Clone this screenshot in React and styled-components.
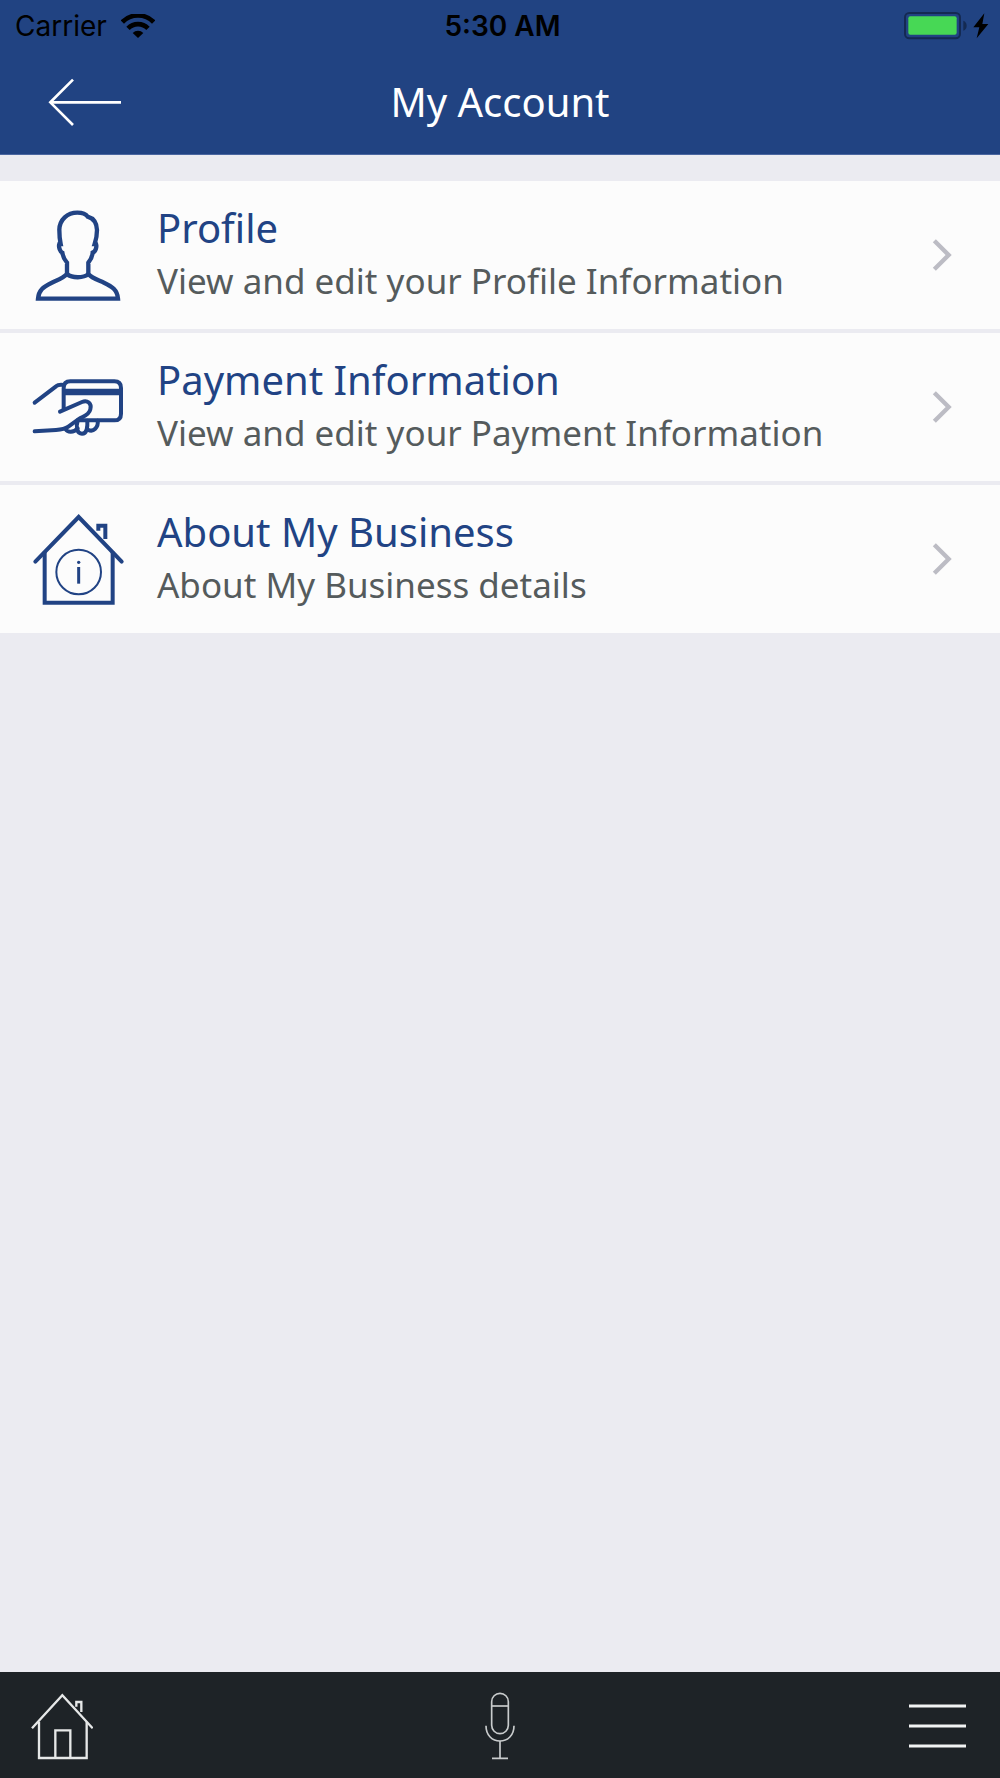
import styled, { createGlobalStyle } from "styled-components";

const items = [
  {
    title: "Profile",
    text: "View and edit your Profile Information",
    Icon: ProfileIcon,
  },
  {
    title: "Payment Information",
    text: "View and edit your Payment Information",
    Icon: PaymentIcon,
  },
  {
    title: "About My Business",
    text: "About My Business details",
    Icon: BusinessIcon,
  },
];

const App = () => {
  return (
    <Page>
      <GlobalStyle />
      <Header>
        <StatusBar>
          <Carrier>
            Carrier
            <WifiIcon />
          </Carrier>
          <Time>5:30 AM</Time>
          <Power>
            <BatteryIcon />
          </Power>
        </StatusBar>
        <NavBar>
          <BackButton aria-label="Back">
            <BackIcon />
          </BackButton>
          <Title>My Account</Title>
        </NavBar>
      </Header>
      <Menu>
        {items.map(({ title, text, Icon }) => (
          <MenuItem key={title} href="#">
            <Icon />
            <MenuText>
              <MenuTitle>{title}</MenuTitle>
              <MenuInfo>{text}</MenuInfo>
            </MenuText>
            <ChevronIcon />
          </MenuItem>
        ))}
      </Menu>
      <TabBar>
        <TabButton aria-label="Home" $align="flex-start">
          <HomeIcon />
        </TabButton>
        <TabButton aria-label="Voice" $align="center">
          <MicIcon />
        </TabButton>
        <TabButton aria-label="Menu" $align="flex-end">
          <BarsIcon />
        </TabButton>
      </TabBar>
    </Page>
  );
};

export default App;

function WifiIcon() {
  return (
    <svg width="34" height="24" viewBox="0 0 102 72" aria-hidden="true">
      <path d="M51 72 L35 57 A22 22 0 0 1 67 57 Z" fill="#000" />
      <path d="M21 43 A42 42 0 0 1 81 43" fill="none" stroke="#000" strokeWidth="14" />
      <path d="M4 24 A66 66 0 0 1 98 24" fill="none" stroke="#000" strokeWidth="14" />
    </svg>
  );
}

function BatteryIcon() {
  return (
    <svg width="86" height="28" viewBox="0 0 258 84" aria-hidden="true">
      <rect x="3" y="3" width="165" height="76" rx="13" fill="none" stroke="#142a52" strokeWidth="6" />
      <rect x="13" y="13" width="145" height="55" rx="6" fill="#47d855" />
      <path d="M178 26 Q188 30 188 41 Q188 52 178 56 Z" fill="#142a52" />
      <path d="M241 4 L208 46 H226 L218 79 L253 36 H235 Z" fill="#000" />
    </svg>
  );
}

function BackIcon() {
  return (
    <svg width="74" height="50" viewBox="0 0 222 150" fill="none" stroke="#fff" strokeWidth="8" aria-hidden="true">
      <path d="M6 76 H219" />
      <path d="M75 8 L7 76 L75 144" />
    </svg>
  );
}

function ProfileIcon() {
  return (
    <ItemSvg viewBox="0 0 360 360" strokeWidth="13">
      <path d="M54 311 H294 C292 285 276 274 252 263 C232 254 216 250 205 237 V203 C213 193 217 186 218 173 C227 170 231 155 228 147 H224 C229 132 231 117 231 105 C230 82 221 70 203 65 C197 56 184 53 172 53 C142 53 119 74 118 104 C118 119 119 133 122 147 H118 C115 155 120 170 127 173 C129 187 132 193 141 203 V237 C130 249 113 255 94 264 C69 276 56 286 54 311 Z" />
      <path d="M141 237 C156 250 191 250 205 237" />
    </ItemSvg>
  );
}

function PaymentIcon() {
  return (
    <ItemSvg viewBox="0 -9 360 360" strokeWidth="12" strokeLinecap="round">
      <path d="M44 158 L108 109 Q116 102 132 105" />
      <path d="M131 176 V114 Q131 94 151 94 H283 Q303 94 303 114 V191 Q303 211 283 211 H174" />
      <path d="M132 126 H303" strokeWidth="20" strokeLinecap="butt" />
      <path d="M120 185 L186 156 C202 149 216 160 211 178 C207 196 188 200 178 206 L145 230 C134 238 124 239 108 240 L44 244" />
      <path d="M137 238 C143 248 160 249 173 235" />
      <path d="M173 212 C167 232 171 251 186 251 C201 251 203 231 202 212" />
      <path d="M204 239 C220 248 236 232 233 212" />
    </ItemSvg>
  );
}

function BusinessIcon() {
  return (
    <ItemSvg viewBox="0 -3 360 360" strokeWidth="12">
      <path d="M46 185 L176 51 L305 185" strokeLinecap="round" />
      <path d="M74 155 V308 H278 V155" />
      <path d="M235 92 V77 H256 V117" />
      <circle cx="176" cy="216" r="67" strokeWidth="6" />
      <path d="M176 201 V251" strokeWidth="9" />
      <circle cx="176" cy="187" r="5" fill="#214384" stroke="none" />
    </ItemSvg>
  );
}

function ChevronIcon() {
  return (
    <svg width="20" height="32" viewBox="0 0 60 96" fill="none" stroke="#bcbcc4" strokeWidth="13" aria-hidden="true">
      <path d="M7 5 L50 48 L7 91" />
    </svg>
  );
}

function HomeIcon() {
  return (
    <svg width="62" height="68" viewBox="0 0 186 204" fill="none" stroke="#e6e8e8" strokeWidth="7" aria-hidden="true">
      <path d="M3 109 L94 10 L185 109" />
      <path d="M24 89 V198 H167 V89" />
      <path d="M73 198 V115 H118 V198" />
      <path d="M136 44 V30 H151 V60" />
    </svg>
  );
}

function MicIcon() {
  return (
    <svg width="30" height="68" viewBox="0 0 90 204" fill="none" stroke="#c9cccd" strokeWidth="5" aria-hidden="true">
      <rect x="20" y="4" width="50" height="121" rx="25" />
      <path d="M20 42 H70" />
      <path d="M3 101 C3 130 22 147 45 147 C68 147 87 130 87 101" />
      <path d="M45 147 V199 M21 199 H69" />
    </svg>
  );
}

function BarsIcon() {
  return (
    <svg width="60" height="46" viewBox="0 0 60 46" fill="none" stroke="#f1f3f3" strokeWidth="3" aria-hidden="true">
      <path d="M0 3 H57 M0 23 H57 M0 43 H57" />
    </svg>
  );
}

const GlobalStyle = createGlobalStyle`
  * {
    box-sizing: border-box;
  }

  body {
    margin: 0;
    background-color: #ebebf1;
  }
`;

const Page = styled.div`
  min-height: 100vh;
  display: flex;
  flex-direction: column;
  font-family: "Noto Sans", sans-serif;
`;

const Header = styled.header`
  background-color: #214382;
  border-bottom: 1px solid #4a66a0;
`;

const StatusBar = styled.div`
  height: 48px;
  padding: 3px 10px 0 15px;
  display: grid;
  grid-template-columns: 1fr auto 1fr;
  align-items: center;
  font-family: Inter, sans-serif;
  font-size: 28px;
  line-height: 36px;
  color: #000;
`;

const Carrier = styled.div`
  display: flex;
  align-items: center;
  gap: 14px;
`;

const Time = styled.div`
  font-weight: 600;
`;

const Power = styled.div`
  display: flex;
  justify-content: flex-end;
`;

const NavBar = styled.div`
  height: 106px;
  padding: 2px 48px 0;
  display: grid;
  grid-template-columns: 1fr auto 1fr;
  align-items: center;
`;

const BackButton = styled.button`
  display: flex;
  justify-self: start;
  padding: 0;
  border: none;
  background: none;
  cursor: pointer;
`;

const Title = styled.h1`
  margin: 0;
  font-size: 40px;
  line-height: 52px;
  font-weight: 400;
  color: #fff;
`;

const Menu = styled.nav`
  flex: 1;
  display: flex;
  flex-direction: column;
  gap: 4px;
  padding-top: 26px;
`;

const MenuItem = styled.a`
  min-height: 148px;
  padding: 0 48px 0 20px;
  display: flex;
  align-items: center;
  gap: 17px;
  background-color: #fcfcfc;
  text-decoration: none;
`;

const ItemSvg = styled.svg.attrs({ "aria-hidden": true })`
  width: 120px;
  height: 120px;
  flex-shrink: 0;
  fill: none;
  stroke: #214384;
`;

const MenuText = styled.div`
  flex: 1;
`;

const MenuTitle = styled.div`
  font-size: 40px;
  line-height: 52px;
  color: #214384;
`;

const MenuInfo = styled.div`
  font-size: 35px;
  line-height: 54px;
  color: #555b5c;
`;

const TabBar = styled.footer`
  height: 106px;
  padding: 2px 31px 0;
  display: grid;
  grid-template-columns: 1fr auto 1fr;
  align-items: center;
  background-color: #1e2327;
`;

const TabButton = styled.button`
  display: flex;
  justify-content: ${({ $align }) => $align};
  padding: 0;
  border: none;
  background: none;
  cursor: pointer;
`;
